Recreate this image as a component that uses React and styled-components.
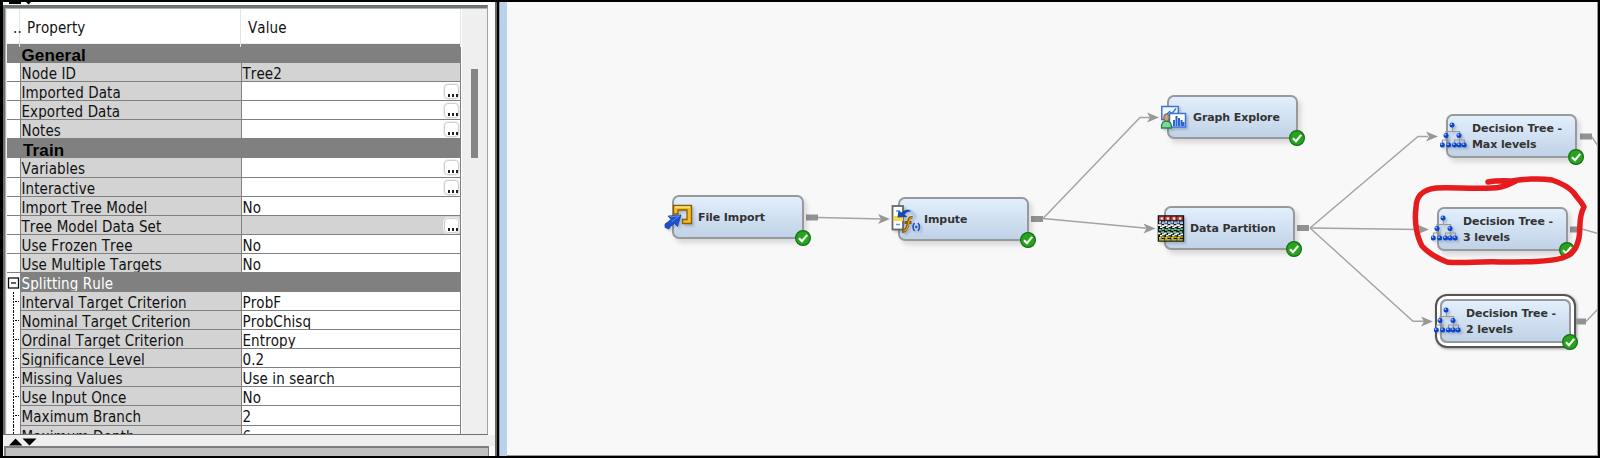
import React from "react";
import styled, { createGlobalStyle, css } from "styled-components";

const Global = createGlobalStyle`
  * { box-sizing: border-box; }
  body { margin: 0; background: #000; overflow: hidden; }
`;

const Window = styled.div`
  width: 1600px;
  height: 458px;
  display: flex;
  padding: 2px 2px 2px 3px;
  background: #000;
  color: #111;
  font-family: "DejaVu Sans Condensed", "DejaVu Sans", sans-serif;
  font-stretch: condensed;
  font-kerning: none;
`;

const Sidebar = styled.div`
  width: 492px;
  flex: none;
  display: flex;
  flex-direction: column;
  background: #fafafa;
`;

const TopStrip = styled.div`
  height: 3px;
  flex: none;
  padding-left: 6px;
  overflow: hidden;
  background: #fafafa;
  svg { display: block; }
`;

const Frame = styled.div`
  width: 485px;
  height: 430px;
  flex: none;
  display: flex;
  padding: 1px 0 0 2px;
  border: solid #6c7070;
  border-width: 3px 1px 1px 2px;
  border-right-color: #9ca3a8;
  box-shadow: inset 0 1px #aab2b8, inset 1px 0 #aab2b8;
  background: #efefef;
`;

const Table = styled.div`
  width: 454px;
  height: 425px;
  flex: none;
  overflow: hidden;
  background: #fff;
`;

const HeaderRow = styled.div`
  height: 35px;
  display: grid;
  grid-template-columns: 13px 221px 220px;
  border-bottom: 1px solid #efefef;
  background: #fff;
  font-size: 15px;
  line-height: 38px;
`;

const HeaderCell = styled.div`
  padding-left: ${(p) => p.$pad}px;
  border-right: 1px solid #e4e4e4;
  letter-spacing: 0.1px;
  white-space: nowrap;
`;

const Row = styled.div`
  height: 19.08px;
  display: grid;
  grid-template-columns: 14px 221px 219px;
  grid-template-rows: 19.08px;
  font-size: 15px;
  line-height: 22px;
  letter-spacing: 0.09px;
  white-space: nowrap;
`;

const Section = styled.div`
  height: 19.08px;
  padding-left: ${(p) => p.$indent}px;
  background: #808080;
  color: #000;
  font: bold 17px/23px "Liberation Sans", Arial, sans-serif;
  letter-spacing: 0.15px;
`;

const Cell = styled.div`
  border: solid #808080;
  border-width: 0 1px 1px 0;
  padding-left: 0.5px;
  overflow: hidden;
  background: ${(p) => (p.$shaded ? "#d3d3d3" : "#fff")};
  display: flex;
  justify-content: space-between;
  ${(p) => p.$group && css`
    background: #808080;
    color: #fff;
  `}
`;

const Gutter = styled.div`
  border-right: 1px solid #808080;
  border-bottom: ${(p) => (p.$tree ? "0" : "1px solid #808080")};
  background: #fff;
  overflow: hidden;
  display: flex;
`;

const Ellipsis = styled.span`
  width: 15px;
  height: 15px;
  margin: 2px 1px 0 0;
  border: 1px solid #cfcfcf;
  border-radius: 4px;
  box-shadow: 0 0 0 1px #efefef;
  background: #fff;
  display: flex;
  justify-content: center;
  align-items: flex-end;
  gap: 2px;
  padding: 0 0 1px 2px;
  i {
    width: 2px;
    height: 3px;
    background: #222;
  }
`;

const ScrollTrack = styled.div`
  flex: 1;
  padding: 60px 0 0 9px;
  border-left: 1px solid #fff;
  background: #efefef;
`;

const Thumb = styled.div`
  width: 7px;
  height: 89px;
  background: #858585;
`;

const Divider = styled.div`
  height: 11px;
  flex: none;
  padding: 3px 0 0 6px;
  background: #efefef;
  svg { display: block; }
`;

const LowerPane = styled.div`
  flex: 1;
  width: 485px;
  margin-left: 1px;
  border: solid #7b7e80;
  border-width: 2px 1px 0 2px;
  background: #c0c0c0;
`;

const Splitter = styled.div`
  width: 12px;
  flex: none;
  border-left: 2px solid #666;
  background: #b9d1ea;
  display: flex;
  &::before {
    content: "";
    width: 3px;
    background: linear-gradient(90deg, #000 2px, #8c9aaa 2px);
  }
`;

const Canvas = styled.div`
  flex: 1;
  position: relative;
  overflow: hidden;
  border-right: 1px solid #999;
  border-bottom: 1px solid #999;
  background: #f8f8f8;
`;

/* Diagram items share the coordinate system of the whole window. */
const Plane = styled.div`
  position: absolute;
  left: -507px;
  top: -2px;
  width: 1600px;
  height: 458px;
`;

const Overlay = styled.svg`
  position: absolute;
  left: 0;
  top: 0;
`;

const NodeBox = styled.div`
  position: absolute;
  left: ${(p) => p.$x}px;
  top: ${(p) => p.$y}px;
  width: ${(p) => p.$w || 131}px;
  height: 44px;
  border: 2px solid #97999c;
  border-radius: 7px;
  background: linear-gradient(#e2effc, #c0d2e7);
  box-shadow: 3px 4px 5px rgba(0, 0, 0, 0.13);
  display: flex;
  align-items: center;
  padding: 1px 0 0 24px;
  ${(p) => p.$selected && css`
    box-shadow: 0 0 0 3px #fff, 0 0 0 5px #555, 1px 1px 3px 5px #999;
  `}
`;

const Label = styled.div`
  font: bold 11px/15.5px "DejaVu Sans", sans-serif;
  font-stretch: normal;
  letter-spacing: -0.1px;
  color: #333;
  white-space: pre;
`;

const Icon = styled.svg`
  position: absolute;
  left: ${(p) => -8 + (p.$dx || 0)}px;
  top: ${(p) => 7 + (p.$dy || 0)}px;
  filter: drop-shadow(2px 2px 1px rgba(50, 70, 100, 0.25));
`;

const Badge = styled.svg`
  position: absolute;
  right: -9px;
  bottom: -9px;
`;

const properties = [
  { section: "General", indent: 14.5 },
  { name: "Node ID", value: "Tree2", locked: true },
  { name: "Imported Data", more: true },
  { name: "Exported Data", more: true },
  { name: "Notes", more: true },
  { section: "Train", indent: 16 },
  { name: "Variables", more: true },
  { name: "Interactive", more: true },
  { name: "Import Tree Model", value: "No" },
  { name: "Tree Model Data Set", more: true, locked: true },
  { name: "Use Frozen Tree", value: "No" },
  { name: "Use Multiple Targets", value: "No" },
  { name: "Splitting Rule", group: true },
  { name: "Interval Target Criterion", value: "ProbF", child: true },
  { name: "Nominal Target Criterion", value: "ProbChisq", child: true },
  { name: "Ordinal Target Criterion", value: "Entropy", child: true },
  { name: "Significance Level", value: "0.2", child: true },
  { name: "Missing Values", value: "Use in search", child: true },
  { name: "Use Input Once", value: "No", child: true },
  { name: "Maximum Branch", value: "2", child: true },
  { name: "Maximum Depth", value: "6", child: true },
];

function PropertyRow({ item }) {
  if (item.section) return <Section $indent={item.indent}>{item.section}</Section>;
  return (
    <Row>
      <Gutter $tree={item.group || item.child}>
        {item.group && (
          <svg width="13" height="19">
            <rect x="1.500" y="5" width="10" height="10" fill="#fff" stroke="#111" strokeWidth="1.300" />
            <path d="M4 10h5" stroke="#111" strokeWidth="1.300" />
          </svg>
        )}
        {item.child && (
          <svg width="13" height="20">
            <path d="M6.500 0v20M8 9.500h4" fill="none" stroke="#111" strokeDasharray="2 1" />
          </svg>
        )}
      </Gutter>
      <Cell $shaded $group={item.group}>{item.name}</Cell>
      <Cell $shaded={item.locked} $group={item.group}>
        <span>{item.value}</span>
        {item.more && <Ellipsis><i /><i /><i /></Ellipsis>}
      </Cell>
    </Row>
  );
}

const TreeIcon = () => (
  <Icon $dy={-2} width="28" height="30" viewBox="0 0 28 30">
    <path d="M12.500 5v5.500M6 15v-4.500h13.500V15M2.500 23v-4h6.500v4M6 15v4M14.500 23v-4h10v4M19.500 15v8" fill="none" stroke="#999" strokeWidth="1.200" />
    {[[12, 4], [6, 14.5], [19, 14.5], [2.3, 24], [8.7, 24], [14.5, 24], [19.3, 24], [24.2, 24]].map(([x, y]) => (
      <g key={x + "-" + y}>
        <circle cx={x} cy={y} r="2.500" fill="#0b43c9" />
        <circle cx={x - 0.7} cy={y - 0.8} r="0.900" fill="#9cc8ff" />
      </g>
    ))}
  </Icon>
);

const ImportIcon = () => (
  <Icon $dx={-2} width="30" height="30" viewBox="0 0 30 30">
    <path d="M9.500 1.500h18v18h-9v-4h4.500v-9.500h-9v4h-4.500z" fill="#f5bd24" stroke="#8d5e00" strokeWidth="1.300" />
    <path d="M11 3h15" stroke="#ffe99a" strokeWidth="1.300" />
    <path d="M1 23.500V20l6-4.500-3-3.500 13-1-3.500 11.500-3-3-4.500 3.500-1 2z" fill="#1c50cf" stroke="#1b3e9a" strokeWidth="0.700" />
    <path d="M5.500 12.800l10-1-8 6" fill="none" stroke="#5d90f0" />
  </Icon>
);

const ImputeIcon = () => (
  <Icon $dx={-1} $dy={-1} width="32" height="32" viewBox="0 0 32 32">
    <rect x="1.500" y="1" width="10.500" height="23.500" fill="#fff" stroke="#666" strokeWidth="1.800" />
    <rect x="3" y="11" width="9" height="5" fill="#ffd83d" />
    <path d="M5 6h4M5 19.500h4" stroke="#4f9cff" strokeWidth="1.500" />
    <path d="M15 6c3-2 6 0 8 5" fill="none" stroke="#a8cdf5" strokeWidth="2.500" />
    <path d="M6.500 12.500l1-7 3 2c3-3 7-4 10-1-3-.500-5 .500-7 3l3 2.500z" fill="#1749ad" />
    <path d="M21.500 12.500c-3-1-4 2-4.500 6s-2 8-6 8M13.500 17.500h7" fill="none" stroke="#8e5a04" strokeWidth="2.800" />
    <path d="M21 12.500c-2.500 0-3 3-3.500 6s-2 7.500-5 7.500" fill="none" stroke="#e0a42a" strokeWidth="1.200" />
    <path d="M23.500 18q-3 4 0 8M27 18q3 4 0 8" fill="none" stroke="#1c4fc4" strokeWidth="1.500" />
    <rect x="24.200" y="20.800" width="2.200" height="2.200" fill="#1c4fc4" />
  </Icon>
);

const GraphIcon = () => (
  <Icon $dx={-2} width="29" height="30" viewBox="0 0 29 30">
    <rect x="2.800" y="2.500" width="16.500" height="13" fill="#eef6ff" stroke="#3c73d8" strokeWidth="1.500" />
    <path d="M7 11l3.500-3.500 2.500 2 4-5" fill="none" stroke="#3671d2" strokeWidth="1.300" />
    <rect x="10.500" y="9.500" width="16" height="13.500" fill="#fff" stroke="#3c73d8" strokeWidth="1.500" />
    <path d="M15 22v-6M17.500 22v-10M20 22v-8M22.500 22v-6M24.500 22v-4" stroke="#2765d3" strokeWidth="2" />
    <path d="M2.500 24c-.500-5 2-7 5-7s5 2 5 7z" fill="#7bd79b" stroke="#26844b" strokeWidth="1.300" />
    <ellipse cx="7.500" cy="13.500" rx="2.800" ry="3.700" fill="#c5a17e" stroke="#7b5c3c" />
  </Icon>
);

const PartitionIcon = () => (
  <Icon $dx={-1} width="29" height="30" viewBox="0 0 29 30">
    <rect x="0.700" y="0.200" width="26.500" height="26.500" fill="#151515" />
    {[0, 1, 2, 3].map((i) => (
      <g key={i} transform={`translate(${i * 6.1} 0)`}>
        <path d="M2 1.500h5.300v3.800H2z" fill="#d74747" />
        <path d="M3.800 2.500h2v2h-2z" fill="#fff" />
        <path d="M2 6h2v2.500H2zM4.700 6.500h3V9h-3z" fill="#9bc4f4" />
        <path d="M1 9.300h3.500v1.700H1zM5 10.300h2.500v1.700H5zM3 11.600h2.500v1.400H3z" fill="#fff" />
        <path d="M2 14h2.500v1.800H2zM5 13.200h2.500V15H5zM4 16.300h3v1.700H4z" fill="#5fd091" />
        <path d="M1 17.500h2.500v1.700H1zM5 18.600h2.700v1.700H5zM3 20h2.300v1.400H3z" fill="#fff" />
        <path d="M2 22h2.500v1.700H2zM5 21.500h2.500v1.300H5zM2 24.300h5.500v1.300H2z" fill="#f3e421" />
      </g>
    ))}
  </Icon>
);

const icons = { tree: TreeIcon, import: ImportIcon, impute: ImputeIcon, graph: GraphIcon, partition: PartitionIcon };

const nodes = [
  { label: "File Import", icon: "import", x: 672, y: 195, w: 132 },
  { label: "Impute", icon: "impute", x: 898, y: 197 },
  { label: "Graph Explore", icon: "graph", x: 1167, y: 95 },
  { label: "Data Partition", icon: "partition", x: 1164, y: 206 },
  { label: "Decision Tree -\nMax levels", icon: "tree", x: 1446, y: 114 },
  { label: "Decision Tree -\n3 levels", icon: "tree", x: 1437, y: 207 },
  { label: "Decision Tree -\n2 levels", icon: "tree", x: 1440, y: 299, selected: true },
];

const edges = [
  "M818 217.500L882 219",
  "M1043 218.500L1140 117.500H1150",
  "M1043 218.500L1147 228.300",
  "M1310 228L1418 136.500H1428",
  "M1310 228L1420 229.500",
  "M1310 228L1413 321.300H1424",
  "M1592 137L1600 149",
  "M1582 229L1600 234",
  "M1586 321.500L1600 307",
];
const arrows = [[890, 219], [1159, 117.5], [1155.5, 228.5], [1438, 136.5], [1429, 229.5], [1433, 321.5]];
const ports = [[806, 217.5], [1031, 219], [1297, 228], [1580, 136.5], [1570, 229.5], [1574, 321.5]];

function DiagramNode({ node }) {
  const NodeIcon = icons[node.icon];
  return (
    <NodeBox $x={node.x} $y={node.y} $w={node.w} $selected={node.selected}>
      <NodeIcon />
      <Label>{node.label}</Label>
      <Badge width="16" height="16" viewBox="0 0 16 16">
        <circle cx="8" cy="8" r="7.400" fill="#27a31c" stroke="#137018" strokeWidth="1.200" />
        <path d="M4 8.200l3 3 5.200-6.300" fill="none" stroke="#fff" strokeWidth="2.200" />
      </Badge>
    </NodeBox>
  );
}

export default function App() {
  return (
    <Window>
      <Global />
      <Sidebar>
        <TopStrip>
          <svg width="24" height="3">
            <path d="M0 0h12v2H0zM17 0h5l-2.500 2.500z" fill="#000" />
          </svg>
        </TopStrip>
        <Frame>
          <Table>
            <HeaderRow>
              <HeaderCell $pad={6}>..</HeaderCell>
              <HeaderCell $pad={7}>Property</HeaderCell>
              <HeaderCell $pad={7}>Value</HeaderCell>
            </HeaderRow>
            {properties.map((item) => (
              <PropertyRow key={item.section || item.name} item={item} />
            ))}
          </Table>
          <ScrollTrack><Thumb /></ScrollTrack>
        </Frame>
        <Divider>
          <svg width="30" height="8">
            <path d="M0 7.500L6.500.500 13.500 7.500zM13.500.500h14l-7 7z" fill="#000" />
          </svg>
        </Divider>
        <LowerPane />
      </Sidebar>
      <Splitter />
      <Canvas>
        <Plane>
          <Overlay width="1600" height="458">
            {edges.map((d) => <path key={d} d={d} fill="none" stroke="#a3a3a3" strokeWidth="1.400" />)}
            {arrows.map(([x, y]) => (
              <path key={x} d={`M${x} ${y}l-12-5 3 5-3 5z`} fill="#989898" />
            ))}
            {ports.map(([x, y]) => (
              <rect key={x} x={x} y={y - 3} width="12" height="6" fill="#929292" />
            ))}
          </Overlay>
          {nodes.map((node) => <DiagramNode key={node.x} node={node} />)}
          <Overlay width="1600" height="458">
            <path
              d="M1488 182C1498 180 1508 181 1516 181C1509 184 1504 188 1492 188C1470 189 1450 187 1436 188C1422 190 1416 196 1416 208C1414 222 1417 237 1422 246C1429 254 1437 258 1447 262C1460 264 1480 261 1500 262C1525 262 1550 262 1562 258C1575 254 1577 246 1579 238C1581 226 1578 218 1584 207C1582 202 1577 198 1574 193C1568 186 1561 183 1552 180C1540 178 1522 179 1512 181"
              fill="none"
              stroke="#e51b1e"
              strokeWidth="5.500"
              strokeLinecap="round"
              strokeLinejoin="round"
            />
          </Overlay>
        </Plane>
      </Canvas>
    </Window>
  );
}
